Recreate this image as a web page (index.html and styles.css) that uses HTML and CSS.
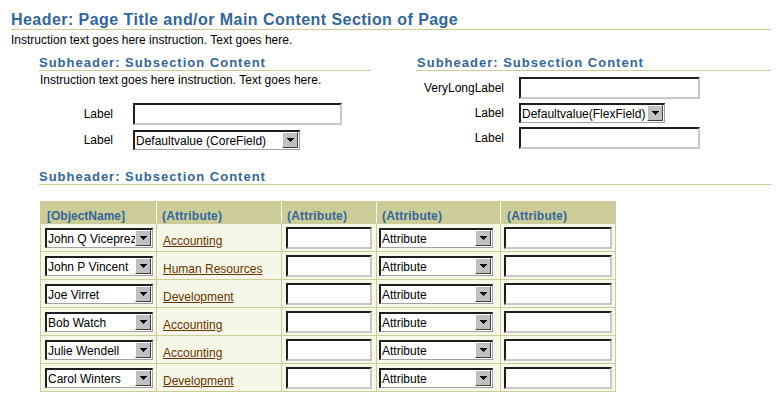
FILE: index.html
```html
<!DOCTYPE html>
<html>
<head>
<meta charset="utf-8">
<link rel="stylesheet" href="styles.css">
</head>
<body>
<div class="page">
  <h1 class="hdr">Header: Page Title and/or Main Content Section of Page</h1>
  <p class="instr">Instruction text goes here instruction. Text goes here.</p>

  <div class="cols">
    <section class="col col-left">
      <h2 class="sub">Subheader: Subsection Content</h2>
      <p class="instr sub-instr">Instruction text goes here instruction. Text goes here.</p>
      <div class="form form-left">
        <label class="lbl">Label</label>
        <input class="fld fld-left" type="text">
        <label class="lbl">Label</label>
        <div class="sel sel-core"><span class="sel-text">Defaultvalue (CoreField)</span><span class="sel-btn"><svg width="7" height="4" viewBox="0 0 7 4"><path d="M0 0h7v1h-1v1h-1v1h-1v1h-1v-1h-1v-1h-1v-1h-1z"/></svg></span></div>
      </div>
    </section>
    <section class="col col-right">
      <h2 class="sub">Subheader: Subsection Content</h2>
      <div class="form form-right">
        <label class="lbl">VeryLongLabel</label>
        <input class="fld fld-right" type="text">
        <label class="lbl">Label</label>
        <div class="sel sel-flex"><span class="sel-text">Defaultvalue(FlexField)</span><span class="sel-btn"><svg width="7" height="4" viewBox="0 0 7 4"><path d="M0 0h7v1h-1v1h-1v1h-1v1h-1v-1h-1v-1h-1v-1h-1z"/></svg></span></div>
        <label class="lbl">Label</label>
        <input class="fld fld-right" type="text">
      </div>
    </section>
  </div>

  <h2 class="sub sub-wide">Subheader: Subsection Content</h2>

  <table class="grid">
    <thead>
      <tr>
        <th class="c1">[ObjectName]</th>
        <th class="c2">(Attribute)</th>
        <th class="c3">(Attribute)</th>
        <th class="c4">(Attribute)</th>
        <th class="c5">(Attribute)</th>
      </tr>
    </thead>
    <tbody>
      <tr>
        <td class="c1"><div class="sel sel-name"><span class="sel-text">John Q Viceprez</span><span class="sel-btn"><svg width="7" height="4" viewBox="0 0 7 4"><path d="M0 0h7v1h-1v1h-1v1h-1v1h-1v-1h-1v-1h-1v-1h-1z"/></svg></span></div></td>
        <td class="c2"><a href="#" class="lnk">Accounting</a></td>
        <td class="c3"><input class="fld fld-c3" type="text"></td>
        <td class="c4"><div class="sel sel-attr"><span class="sel-text">Attribute</span><span class="sel-btn"><svg width="7" height="4" viewBox="0 0 7 4"><path d="M0 0h7v1h-1v1h-1v1h-1v1h-1v-1h-1v-1h-1v-1h-1z"/></svg></span></div></td>
        <td class="c5"><input class="fld fld-c5" type="text"></td>
      </tr>
      <tr>
        <td class="c1"><div class="sel sel-name"><span class="sel-text">John P Vincent</span><span class="sel-btn"><svg width="7" height="4" viewBox="0 0 7 4"><path d="M0 0h7v1h-1v1h-1v1h-1v1h-1v-1h-1v-1h-1v-1h-1z"/></svg></span></div></td>
        <td class="c2"><a href="#" class="lnk">Human Resources</a></td>
        <td class="c3"><input class="fld fld-c3" type="text"></td>
        <td class="c4"><div class="sel sel-attr"><span class="sel-text">Attribute</span><span class="sel-btn"><svg width="7" height="4" viewBox="0 0 7 4"><path d="M0 0h7v1h-1v1h-1v1h-1v1h-1v-1h-1v-1h-1v-1h-1z"/></svg></span></div></td>
        <td class="c5"><input class="fld fld-c5" type="text"></td>
      </tr>
      <tr>
        <td class="c1"><div class="sel sel-name"><span class="sel-text">Joe Virret</span><span class="sel-btn"><svg width="7" height="4" viewBox="0 0 7 4"><path d="M0 0h7v1h-1v1h-1v1h-1v1h-1v-1h-1v-1h-1v-1h-1z"/></svg></span></div></td>
        <td class="c2"><a href="#" class="lnk">Development</a></td>
        <td class="c3"><input class="fld fld-c3" type="text"></td>
        <td class="c4"><div class="sel sel-attr"><span class="sel-text">Attribute</span><span class="sel-btn"><svg width="7" height="4" viewBox="0 0 7 4"><path d="M0 0h7v1h-1v1h-1v1h-1v1h-1v-1h-1v-1h-1v-1h-1z"/></svg></span></div></td>
        <td class="c5"><input class="fld fld-c5" type="text"></td>
      </tr>
      <tr>
        <td class="c1"><div class="sel sel-name"><span class="sel-text">Bob Watch</span><span class="sel-btn"><svg width="7" height="4" viewBox="0 0 7 4"><path d="M0 0h7v1h-1v1h-1v1h-1v1h-1v-1h-1v-1h-1v-1h-1z"/></svg></span></div></td>
        <td class="c2"><a href="#" class="lnk">Accounting</a></td>
        <td class="c3"><input class="fld fld-c3" type="text"></td>
        <td class="c4"><div class="sel sel-attr"><span class="sel-text">Attribute</span><span class="sel-btn"><svg width="7" height="4" viewBox="0 0 7 4"><path d="M0 0h7v1h-1v1h-1v1h-1v1h-1v-1h-1v-1h-1v-1h-1z"/></svg></span></div></td>
        <td class="c5"><input class="fld fld-c5" type="text"></td>
      </tr>
      <tr>
        <td class="c1"><div class="sel sel-name"><span class="sel-text">Julie Wendell</span><span class="sel-btn"><svg width="7" height="4" viewBox="0 0 7 4"><path d="M0 0h7v1h-1v1h-1v1h-1v1h-1v-1h-1v-1h-1v-1h-1z"/></svg></span></div></td>
        <td class="c2"><a href="#" class="lnk">Accounting</a></td>
        <td class="c3"><input class="fld fld-c3" type="text"></td>
        <td class="c4"><div class="sel sel-attr"><span class="sel-text">Attribute</span><span class="sel-btn"><svg width="7" height="4" viewBox="0 0 7 4"><path d="M0 0h7v1h-1v1h-1v1h-1v1h-1v-1h-1v-1h-1v-1h-1z"/></svg></span></div></td>
        <td class="c5"><input class="fld fld-c5" type="text"></td>
      </tr>
      <tr>
        <td class="c1"><div class="sel sel-name"><span class="sel-text">Carol Winters</span><span class="sel-btn"><svg width="7" height="4" viewBox="0 0 7 4"><path d="M0 0h7v1h-1v1h-1v1h-1v1h-1v-1h-1v-1h-1v-1h-1z"/></svg></span></div></td>
        <td class="c2"><a href="#" class="lnk">Development</a></td>
        <td class="c3"><input class="fld fld-c3" type="text"></td>
        <td class="c4"><div class="sel sel-attr"><span class="sel-text">Attribute</span><span class="sel-btn"><svg width="7" height="4" viewBox="0 0 7 4"><path d="M0 0h7v1h-1v1h-1v1h-1v1h-1v-1h-1v-1h-1v-1h-1z"/></svg></span></div></td>
        <td class="c5"><input class="fld fld-c5" type="text"></td>
      </tr>
    </tbody>
  </table>
</div>
</body>
</html>
```

FILE: styles.css
```css
body {
  margin: 0;
  font-family: "Liberation Sans", Arial, sans-serif;
  font-size: 12px;
  color: #000;
  background: #fff;
}

.page {
  padding: 0 9px 0 11px;
}

.hdr {
  margin: 11px 0 0;
  font-size: 16px;
  line-height: 18px;
  font-weight: bold;
  letter-spacing: 0.45px;
  color: #336699;
  border-bottom: 1px solid #cccc99;
}

.instr {
  margin: 3px 0 0;
  line-height: 14px;
}

.cols {
  display: flex;
  gap: 45px;
  margin: 9px 0 0 28px;
}

.col-left { width: 333px; }
.col-right { width: 356px; }

.sub {
  margin: 0;
  font-size: 13px;
  line-height: 14px;
  font-weight: bold;
  letter-spacing: 1px;
  color: #336699;
  border-bottom: 1px solid #cccc99;
}

.col-right .sub {
  padding-left: 1px;
}

.sub-instr {
  margin: 2px 0 0 1px;
}

.form {
  display: grid;
  align-items: center;
  justify-content: start;
}

.form-left {
  grid-template-columns: 74px auto;
  column-gap: 20px;
  row-gap: 5px;
  margin-top: 16px;
}

.form-right {
  grid-template-columns: 88px auto;
  column-gap: 15px;
  row-gap: 4px;
  margin-top: 6px;
}

.lbl {
  text-align: right;
}

.fld {
  display: block;
  box-sizing: border-box;
  height: 22px;
  margin: 0;
  padding: 0 2px;
  border: 2px solid;
  border-color: #1e1e1e #c8c8c8 #c8c8c8 #1e1e1e;
  background: #fff;
  font: 12px "Liberation Sans", Arial, sans-serif;
  outline: none;
  border-radius: 0;
}

.fld-left { width: 209px; }
.fld-right { width: 181px; }
.fld-c3 { width: 86px; }
.fld-c5 { width: 108px; }

.sel {
  display: flex;
  box-sizing: border-box;
  height: 20px;
  border-style: solid;
  border-width: 2px 1px 1px 2px;
  border-color: #1e1e1e #a0a0a0 #a0a0a0 #1e1e1e;
  background: #fff;
}

.sel-core { width: 167px; }
.sel-flex { width: 146px; }
.sel-name { width: 108px; }
.sel-attr { width: 114px; }

.sel-text {
  flex: 1;
  min-width: 0;
  overflow: hidden;
  white-space: nowrap;
  line-height: 16px;
  padding: 1px 0 0 1px;
}

.sel-btn {
  flex: none;
  width: 16px;
  height: 16px;
  box-sizing: border-box;
  margin-right: 1px;
  background: #c0c0c0;
  border: 1px solid;
  border-color: #fff #404040 #404040 #fff;
  display: flex;
  align-items: center;
  justify-content: center;
}

.sel-btn svg {
  display: block;
  fill: #000;
  shape-rendering: crispEdges;
}

.sub-wide {
  margin: 20px 0 0 28px;
}

.grid {
  margin: 16px 0 0 29px;
  width: 576px;
  box-sizing: border-box;
  table-layout: fixed;
  border-collapse: separate;
  border-spacing: 0;
  border: 1px solid #cccc99;
  background: #f7f7e7;
}

.grid th {
  box-sizing: border-box;
  height: 21px;
  padding: 7px 0 0 5px;
  line-height: 14px;
  vertical-align: top;
  text-align: left;
  font-weight: bold;
  font-size: 12px;
  letter-spacing: 0.2px;
  color: #336699;
  background: #cccc99;
  white-space: nowrap;
}

.grid th + th {
  border-left: 1px solid #f7f7e7;
}

.grid th.c1 { padding-left: 6px; letter-spacing: 0; }
.grid th.c5 { padding-left: 6px; }

.grid .c1 { width: 115px; }
.grid .c2 { width: 125px; }
.grid .c3 { width: 95px; }
.grid .c4 { width: 124px; }
.grid .c5 { width: 115px; }

.grid td {
  box-sizing: border-box;
  height: 28px;
  padding: 0;
  vertical-align: top;
  border-top: 1px solid #cccc99;
}

.grid td + td {
  border-left: 1px solid #cccc99;
}

.grid td.c1 { padding: 4px 0 0 4px; }
.grid td.c2 { padding: 10px 0 0 6px; line-height: 14px; }
.grid td.c3 { padding: 3px 0 0 4px; }
.grid td.c4 { padding: 4px 0 0 2px; }
.grid td.c5 { padding: 3px 0 0 3px; }

.lnk {
  color: #663300;
  text-decoration: underline;
  white-space: nowrap;
}
```
